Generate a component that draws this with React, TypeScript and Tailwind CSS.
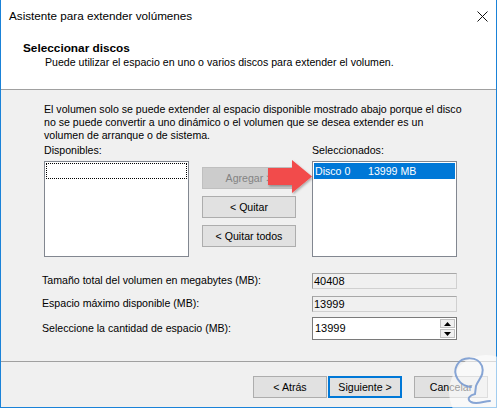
import React from 'react'

function WinButton({ children, disabled, primary, className = '' }: { children: React.ReactNode; disabled?: boolean; primary?: boolean; className?: string }) {
  const look = disabled
    ? 'bg-[#cccccc] border border-[#bfbfbf] text-[#838383]'
    : primary
      ? 'bg-[#e1e1e1] border-2 border-[#0078d7] text-black'
      : 'bg-[#e1e1e1] border border-[#adadad] text-black'
  return (
    <div className={`h-[22px] flex items-center justify-center leading-none ${look} ${className}`}>
      {children}
    </div>
  )
}

function ReadOnlyBox({ value }: { value: string }) {
  return (
    <div className="w-[145px] h-[16px] bg-[#f0f0f0] border border-[#d0d0d0] border-l-[#9a9a9a] border-t-[#a8a8a8] flex items-center pl-[1px] leading-none text-[11px]">
      {value}
    </div>
  )
}

export default function App() {
  return (
    <div className="w-[499px] h-[409px] bg-white relative overflow-hidden text-[10.6px] text-black font-['Liberation_Sans',Arial,sans-serif]">
      <div className="w-[497px] h-[408px] border-x border-b border-[#1a82d8] flex flex-col">
        {/* barra de titulo */}
        <div className="h-[30px] shrink-0 flex items-center justify-between pl-[8px] pr-[8px] pt-[2px] bg-white">
          <span className="text-[11.7px] leading-none">Asistente para extender volúmenes</span>
          <svg width="11" height="11" viewBox="0 0 11 11">
            <path d="M0.5 0.5 L10.5 10.5 M10.5 0.5 L0.5 10.5" stroke="#111" strokeWidth="1" />
          </svg>
        </div>

        {/* cabecera */}
        <div className="h-[60px] shrink-0 bg-white border-b border-[#a0a0a0] pt-[11px] pl-[22px]">
          <div className="font-bold text-[11.8px] leading-[14px]">Seleccionar discos</div>
          <div className="ml-[22px] leading-[14px]">Puede utilizar el espacio en uno o varios discos para extender el volumen.</div>
        </div>

        {/* cuerpo */}
        <div className="flex-1 bg-[#f0f0f0] border-b border-[#a0a0a0] pl-[43px] pt-[13px]">
          <p className="leading-[13px] whitespace-nowrap">
            El volumen solo se puede extender al espacio disponible mostrado abajo porque el disco
            <br />
            no se puede convertir a uno dinámico o el volumen que se desea extender es un
            <br />
            volumen de arranque o de sistema.
          </p>

          <div className="flex mt-[2px]">
            <div className="w-[145px]">
              <div className="leading-[13px]">Disponibles:</div>
              <div className="mt-[4px] h-[96px] bg-white border border-[#828790] p-[1px]">
                <div className="h-[16px] border border-dotted border-black" />
              </div>
            </div>

            <div className="w-[94px] ml-[13px] pt-[23px] flex flex-col gap-[7px]">
              <WinButton disabled>Agregar &gt;</WinButton>
              <WinButton>&lt; Quitar</WinButton>
              <WinButton>&lt; Quitar todos</WinButton>
            </div>

            <div className="w-[145px] ml-[16px]">
              <div className="leading-[13px]">Seleccionados:</div>
              <div className="mt-[4px] h-[96px] bg-white border border-[#828790] p-[1px]">
                <div className="h-[16px] bg-[#0078d7] text-white flex items-center leading-none pl-[1px]">
                  <span className="w-[53px]">Disco 0</span>
                  <span>13999 MB</span>
                </div>
              </div>
            </div>
          </div>

          <div className="-ml-[2px] mt-[16px] flex flex-col">
            <div className="flex items-center">
              <span className="w-[270px]">Tamaño total del volumen en megabytes (MB):</span>
              <ReadOnlyBox value="40408" />
            </div>
            <div className="flex items-center mt-[7px]">
              <span className="w-[270px]">Espacio máximo disponible (MB):</span>
              <ReadOnlyBox value="13999" />
            </div>
            <div className="flex items-center mt-[5px]">
              <span className="w-[270px]">Seleccione la cantidad de espacio (MB):</span>
              <div className="w-[145px] h-[23px] bg-white border border-[#7a7a7a] flex">
                <div className="flex-1 flex items-center pl-[2px] leading-none text-[11px]">13999</div>
                <div className="w-[17px] flex flex-col gap-[1px] bg-white p-[1px]">
                  <div className="flex-1 flex items-center justify-center bg-[#f0f0f0] border border-[#c0c0c0]">
                    <svg width="7" height="4" viewBox="0 0 7 4"><path d="M3.5 0 L7 4 L0 4 Z" fill="#000" /></svg>
                  </div>
                  <div className="flex-1 flex items-center justify-center bg-[#f0f0f0] border border-[#c0c0c0]">
                    <svg width="7" height="4" viewBox="0 0 7 4"><path d="M0 0 L7 0 L3.5 4 Z" fill="#000" /></svg>
                  </div>
                </div>
              </div>
            </div>
          </div>
        </div>

        {/* pie */}
        <div className="h-[45px] shrink-0 bg-[#f0f0f0] flex justify-end items-start pt-[14px] pr-[8px]">
          <WinButton className="w-[74px]">&lt; Atrás</WinButton>
          <WinButton primary className="w-[74px] ml-[1px]">Siguiente &gt;</WinButton>
          <WinButton className="w-[74px] ml-[12px]">Cancelar</WinButton>
        </div>
      </div>

      {/* flecha y marca de agua superpuestas */}
      <svg className="absolute inset-0 pointer-events-none" width="499" height="409" viewBox="0 0 499 409">
        <defs>
          <filter id="sh" x="-20%" y="-20%" width="140%" height="140%">
            <feDropShadow dx="1" dy="1.5" stdDeviation="1" floodColor="#000" floodOpacity="0.3" />
          </filter>
        </defs>
        <polygon points="268,168 292,168 292,160 312,176.5 292,193 292,185 268,185" fill="#f24b4b" filter="url(#sh)" />
        <circle cx="486" cy="392" r="37" fill="#ffffff" fillOpacity="0.6" />
        <path
          d="M471 387 C459 386 452 374 457 365 C462 356 478 356 482 366 C485 375 478 380 476 386 L475 394 C470 395 466 399 471 402 C477 405 484 401 490 401"
          fill="none"
          stroke="#7a9bd0"
          strokeWidth="2"
          strokeLinecap="round"
          strokeOpacity="0.9"
        />
      </svg>
    </div>
  )
}
